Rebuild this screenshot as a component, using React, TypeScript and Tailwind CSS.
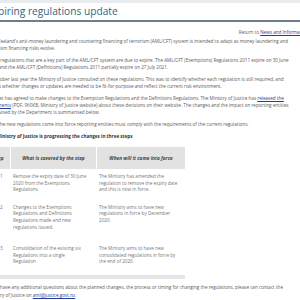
const body = "font-['Open_Sans',sans-serif]";

function Line({ children }: { children: React.ReactNode }) {
  return <span className="block whitespace-nowrap">{children}</span>;
}

const rows = [
  {
    step: "1",
    what: ["Remove the expiry date of 30 June", "2020 from the Exemptions", "Regulations"],
    when: ["The Ministry has amended the", "regulation to remove the expiry date", "and this is now in force."],
    pad: "pt-[4px] pb-[6px]",
  },
  {
    step: "2",
    what: ["Changes to the Exemptions", "Regulations and Definitions", "Regulations made and new", "regulations issued."],
    when: ["The Ministry aims to have new", "regulations in force by December", "2020."],
    pad: "pt-[5px] pb-[11px]",
  },
  {
    step: "3",
    what: ["Consolidation of the existing six", "Regulations into a single", "Regulation"],
    when: ["The Ministry aims to have new", "consolidated regulations in force by", "the end of 2020."],
    pad: "pt-[4px] pb-[10px]",
  },
];

export default function App() {
  return (
    <div className={`w-[300px] h-[300px] overflow-hidden bg-white ${body}`}>
      <div className="-ml-[13px] w-[321px]">
        {/* Title */}
        <div className="h-[3px] bg-[#e9ecef]" />
        <div className="h-[19px] flex items-center border-b-[2px] border-[#6e7e8c]">
          <h1 className="text-[10.2px] leading-none text-[#33657d] whitespace-nowrap">
            Expiring regulations update
          </h1>
        </div>

        <div className="text-[4.6px] leading-[7px] text-[#5a5a5a]">
          <p className="mt-[7px] text-right">
            Return to <a className="text-[#1f3f9a] underline">News and Information</a>
          </p>

          <p className="mt-[2px]">
            <Line>New Zealand's anti-money laundering and countering financing of terrorism (AML/CFT) system is intended to adapt as money laundering and</Line>
            <Line>terrorism financing risks evolve.</Line>
          </p>

          <p className="mt-[5px]">
            <Line>Some regulations that are a key part of the AML/CFT system are due to expire. The AML/CFT (Exemptions) Regulations 2011 expire on 30 June</Line>
            <Line>2020 and the AML/CFT (Definitions) Regulations 2011 partially expire on 27 July 2021.</Line>
          </p>

          <p className="mt-[5px]">
            <Line>In October last year the Ministry of Justice consulted on these regulations. This was to identify whether each regulation is still required, and</Line>
            <Line>assess whether changes or updates are needed to be fit-for-purpose and reflect the current risk environment.</Line>
          </p>

          <p className="mt-[5px]">
            <Line>
              Cabinet has agreed to make changes to the Exemption Regulations and the Definitions Regulations. The Ministry of Justice has{" "}
              <a className="text-[#1f3f9a] underline">released the</a>
            </Line>
            <Line>
              <a className="text-[#1f3f9a] underline">documents</a> (PDF, 960KB, Ministry of Justice website) about these decisions on their website. The changes and the impact on reporting entities
            </Line>
            <Line>supervised by the Department is summarised below.</Line>
          </p>

          <p className="mt-[5px]">
            <Line>Until the new regulations come into force reporting entities must comply with the requirements of the current regulations.</Line>
          </p>

          <p className="mt-[5px] font-bold text-[#333]">
            <Line>The Ministry of Justice is progressing the changes in three steps</Line>
          </p>

          {/* Table */}
          <div className="mt-[7px] w-[198px]">
            <div className="grid grid-cols-[23px_85px_88px] gap-x-[1px] h-[22px]">
              <div className="bg-[#e2e2e2] flex items-center justify-center font-bold italic text-[#444] text-[4.8px]">Step</div>
              <div className="bg-[#e2e2e2] flex items-center justify-center font-bold italic text-[#444] text-[4.8px]">What is covered by the step</div>
              <div className="bg-[#e2e2e2] flex items-center justify-center font-bold italic text-[#444] text-[4.8px]">When will it come into force</div>
            </div>
            {rows.map((r) => (
              <div key={r.step} className={`grid grid-cols-[23px_85px_88px] gap-x-[1px] leading-[6.6px] text-[#777] ${r.pad}`}>
                <div className="pl-[13px] text-[#3b82c4]">{r.step}</div>
                <div className="pl-[2px]">
                  {r.what.map((l) => (
                    <Line key={l}>{l}</Line>
                  ))}
                </div>
                <div className="pl-[2px]">
                  {r.when.map((l) => (
                    <Line key={l}>{l}</Line>
                  ))}
                </div>
              </div>
            ))}
            <div className="h-[4px] bg-[#e6e6e6]" />
          </div>

          <p className="mt-[4px] leading-[8px]">
            <Line>If you have any additional questions about the planned changes, the process or timing for changing the regulations, please can contact the</Line>
            <Line>
              Ministry of Justice on <a className="text-[#1f3f9a] underline">aml@justice.govt.nz</a>.
            </Line>
          </p>
        </div>
      </div>
    </div>
  );
}
